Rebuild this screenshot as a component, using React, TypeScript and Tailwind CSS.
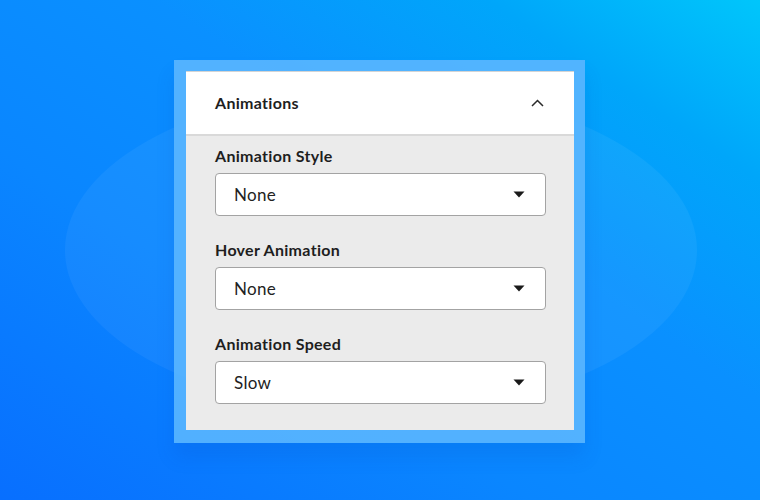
const fields = [
  { label: "Animation Style", value: "None" },
  { label: "Hover Animation", value: "None" },
  { label: "Animation Speed", value: "Slow" },
];

function Caret() {
  return (
    <svg width="12" height="7" viewBox="0 0 12 7" className="shrink-0">
      <path d="M0.5 0.5 H11.5 L6 6.5 Z" fill="#1a1a1a" />
    </svg>
  );
}

function Chevron() {
  return (
    <svg width="13" height="8" viewBox="0 0 13 8" fill="none">
      <path d="M1 7 L6.5 1.5 L12 7" stroke="#2a2a2a" strokeWidth="1.5" />
    </svg>
  );
}

export default function App() {
  return (
    <div className="relative w-[760px] h-[500px] overflow-hidden flex items-center justify-center font-['Lato',_sans-serif] bg-[linear-gradient(to_top_right,#086fff_0%,#0a86ff_35%,#0a90ff_60%,#00a6fa_82%,#00c6fb_100%)]">
      {/* soft glow behind the card */}
      <div className="absolute left-[65px] top-[88px] w-[632px] h-[324px] rounded-[50%] bg-white/[0.05] pointer-events-none" />

      <div className="relative w-[411px] pt-[11px] pl-[12px] pr-[11px] pb-[13px] bg-[#5ab6ff]/90 shadow-[0_14px_18px_rgba(0,60,170,0.12)] ml-[-1px] mt-[3px]">
        <div className="w-[388px] bg-white border-t border-[#d4d4d4]">
          <div className="h-[64px] flex items-center justify-between pl-[29px] pr-[30px] border-b-2 border-[#d9d9d9]">
            <span className="text-[16px] font-bold tracking-[0.3px] text-[#1e1e1e]">Animations</span>
            <Chevron />
          </div>

          <div className="bg-[#ebebeb] pl-[29px] pr-[28px] pt-[10px] pb-[26px] flex flex-col gap-[24px]">
            {fields.map((f) => (
              <div key={f.label} className="flex flex-col">
                <span className="h-5 leading-5 mb-[7px] text-[16px] font-bold tracking-[0.3px] text-[#1e1e1e]">{f.label}</span>
                <div className="h-[43px] flex items-center justify-between bg-white border border-[#a3a3a3] rounded-[4px] pl-[18px] pr-[20px]">
                  <span className="text-[17px] tracking-[0.3px] text-[#222]">{f.value}</span>
                  <Caret />
                </div>
              </div>
            ))}
          </div>
        </div>
      </div>
    </div>
  );
}
